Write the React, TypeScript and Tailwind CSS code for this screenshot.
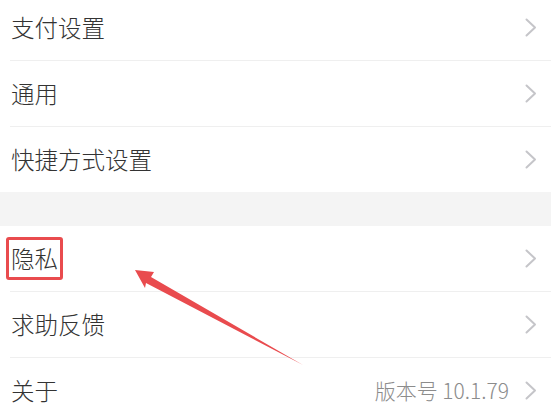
const font = { fontFamily: '"Noto Sans CJK SC", "Noto Sans", sans-serif' };

const Chevron = () => (
  <svg width="12" height="19" viewBox="0 0 12 19" className="shrink-0">
    <polyline points="1.5,1.5 10,9.5 1.5,17.5" fill="none" stroke="#c5c5c9" strokeWidth="2" strokeLinecap="round" strokeLinejoin="round" />
  </svg>
);

const Row = ({ label, extra, boxed }: { label: string; extra?: string; boxed?: boolean }) => (
  <div className="flex items-center h-[65px] pl-[11px] pr-[14px]">
    <div className="flex-1 text-[23.5px] font-light text-[#333333] leading-none">
      {boxed ? (
        <span className="inline-flex items-center h-[43px] -ml-[5px] px-[2px] border-[3px] border-[#e94b4e] rounded-[3px]">
          {label}
        </span>
      ) : (
        label
      )}
    </div>
    {extra && <span className="text-[21px] font-light text-[#8c8c8c] mr-[16px] leading-none">{extra}</span>}
    <Chevron />
  </div>
);

const Divider = () => <div className="ml-[10px] h-px bg-[#efefef]" />;

export default function App() {
  return (
    <div className="relative w-[551px] h-[407px] overflow-hidden bg-white" style={font}>
      <div className="-mt-[5px]">
        <Row label="支付设置" />
        <Divider />
        <Row label="通用" />
        <Divider />
        <Row label="快捷方式设置" />
        <div className="h-[34px] bg-[#f4f4f4]" />
        <Row label="隐私" boxed />
        <Divider />
        <Row label="求助反馈" />
        <Divider />
        <Row label="关于" extra="版本号 10.1.79" />
      </div>
      <svg className="absolute left-0 top-0 pointer-events-none" width="551" height="407">
        <polygon
          points="135,270 154,272 151,277 303,365 146,283 145,288"
          fill="#e94b4e"
        />
      </svg>
    </div>
  );
}
